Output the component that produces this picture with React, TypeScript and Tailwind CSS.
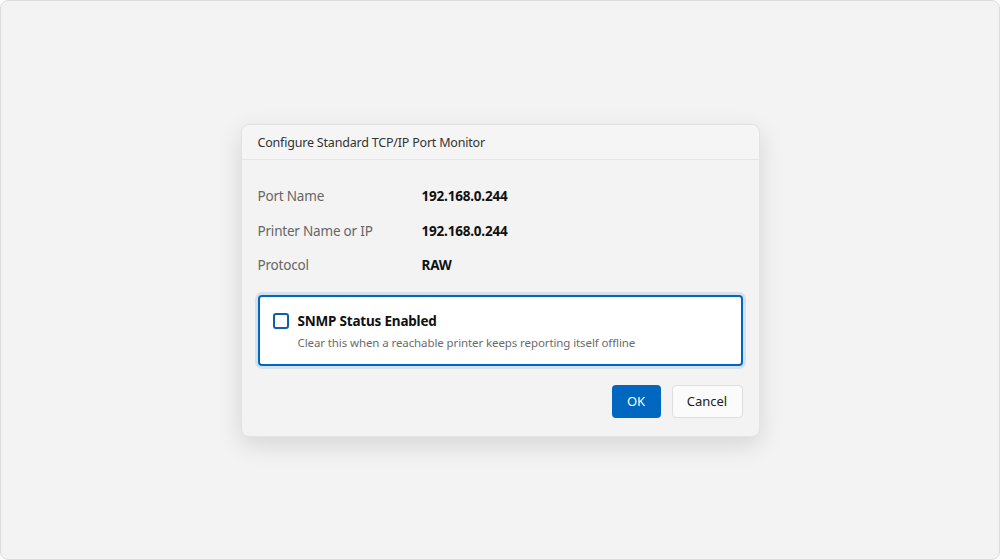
import { useState } from "react";

const rows = [
  { label: "Port Name", value: "192.168.0.244" },
  { label: "Printer Name or IP", value: "192.168.0.244" },
  { label: "Protocol", value: "RAW" },
];

export default function App() {
  const [snmp, setSnmp] = useState(false);

  return (
    <div
      className="h-[560px] w-full bg-[#f3f3f3] border border-[#dcdcdc] rounded-[8px] flex items-center justify-center"
      style={{ fontFamily: '"Noto Sans", "Open Sans", sans-serif' }}
    >
      <div className="mt-[1px] w-[519px] bg-[#f3f3f3] border border-[#e3e3e3] rounded-[8px] shadow-[0_8px_24px_rgba(0,0,0,0.12)]">
        <div className="h-[35px] px-4 pt-[2px] flex items-center border-b border-[#e6e6e6] bg-[#f5f5f5] rounded-t-[8px]">
          <span className="text-[12.5px] tracking-[-0.2px] text-[#333]">Configure Standard TCP/IP Port Monitor</span>
        </div>

        <div className="px-4 pt-[19px] pb-[18px]">
          {rows.map((row) => (
            <div key={row.label} className="h-[34.5px] flex items-center">
              <span className="w-[164px] text-[13.5px] tracking-[-0.2px] text-[#666]">{row.label}</span>
              <span className="text-[13.5px] tracking-[-0.2px] font-bold text-[#111]">{row.value}</span>
            </div>
          ))}

          <label className="mt-[12px] flex gap-[9px] items-start h-[71px] px-[13px] pt-[16px] bg-white border-2 border-[#0067c0] rounded-[4px] shadow-[0_0_0_3px_rgba(0,103,192,0.12)] cursor-pointer">
            <input
              type="checkbox"
              checked={snmp}
              onChange={(e) => setSnmp(e.target.checked)}
              className="appearance-none mt-0 w-[16px] h-[16px] border-2 border-[#0f5fa8] rounded-[3px] bg-white shrink-0"
            />
            <div className="-mt-[2px]">
              <div className="text-[13.5px] tracking-[-0.2px] font-bold text-[#111] leading-[20px]">SNMP Status Enabled</div>
              <div className="text-[11.5px] tracking-[-0.1px] text-[#6b6b6b] leading-[17px] mt-[3px]">
                Clear this when a reachable printer keeps reporting itself offline
              </div>
            </div>
          </label>

          <div className="mt-[19px] flex justify-end gap-[11px]">
            <button className="w-[49px] h-[33px] rounded-[4px] bg-[#0067c0] text-white text-[13px]">OK</button>
            <button className="w-[71px] h-[33px] rounded-[4px] bg-[#fbfbfb] border border-[#dedede] text-[#222] text-[13px]">
              Cancel
            </button>
          </div>
        </div>
      </div>
    </div>
  );
}
